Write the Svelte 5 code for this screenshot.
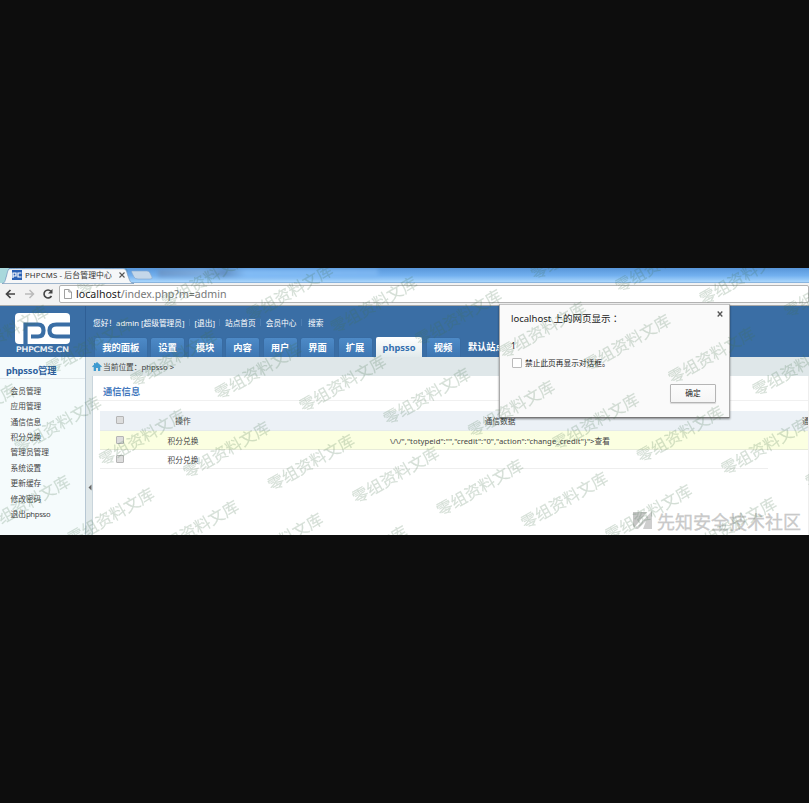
<script>
  const tabs = [
    { t: '我的面板', w: 51.5 }, { t: '设置', w: 33 }, { t: '模块', w: 33 }, { t: '内容', w: 33 },
    { t: '用户', w: 33 }, { t: '界面', w: 33 }, { t: '扩展', w: 33 }, { t: 'phpsso', w: 46, on: true }, { t: '视频', w: 33 }
  ];
  const side = ['会员管理', '应用管理', '通信信息', '积分兑换', '管理员管理', '系统设置', '更新缓存', '修改密码'];
  const marks = [];
  for (let r = -2; r <= 3; r++)
    for (let c = -3; c <= 11; c++) {
      const x = 223 + c * 84.4 - r * 31.4;
      const y = 391 - 268 + c * 12.6 + r * 78.8;
      if (x > -80 && x < 815 && y > -5 && y < 315) marks.push({ x, y });
    }
</script>

<div class="page">
  <div class="shot">
    <div class="strip">
      <svg class="tabshape" width="160" height="16" viewBox="0 0 160 16">
        <path d="M0 0H9L4 15H0Z" fill="#a9d8dc" />
        <path d="M2 15.5C5 15 5 13 6.500 8C8 2 8 .7 11 .7H123C126 .7 126.500 3 128 8C130 13 130 15 134 15.500Z" fill="#f6f7f8" stroke="#7899bb" stroke-width=".7" />
        <path d="M132 3H147Q149 3 150 5L152 9Q153 11 150 11H138Q135 11 134 9L132 5Q131 3 132 3Z" fill="#c4d7e9" stroke="#7fa4cc" stroke-width=".6" />
      </svg>
      <div class="tabline">
        <svg width="10" height="10" viewBox="0 0 10 10"><rect width="10" height="10" fill="#2b62b5" /><path d="M1 8V3H4V6H1M9.500 3H6V7H9.500" fill="none" stroke="#fff" stroke-width="1.200" /></svg>
        <span>PHPCMS - 后台管理中心</span>
        <svg class="x" width="6" height="6" viewBox="0 0 6 6"><path d="M.5 .5L5.500 5.500M5.500 .5L.5 5.500" stroke="#555" stroke-width="1.100" /></svg>
      </div>
      <div class="ghost"></div>
    </div>

    <div class="toolbar">
      <svg width="60" height="20" viewBox="0 0 60 20" fill="none">
        <path d="M15 10H7M10.500 6L6.500 10L10.500 14" stroke="#444" stroke-width="1.700" />
        <path d="M25 10H33M29.500 6L33.500 10L29.500 14" stroke="#bbb" stroke-width="1.500" />
        <path d="M51 7.300A4 4 0 1 0 51.500 12" stroke="#444" stroke-width="1.600" /><path d="M52.500 5V9.500H48Z" fill="#444" />
      </svg>
      <div class="url">
        <svg width="8" height="10" viewBox="0 0 8 10"><path d="M.5 .5H4.800L7.500 3V9.500H.5ZM4.800 .5V3H7.500" fill="#fff" stroke="#888" stroke-width=".8" /></svg>
        <span><b>localhost</b>/index.php?m=admin</span>
      </div>
    </div>

    <div class="head">
      <div class="logo">
        <svg width="85" height="51" viewBox="0 0 85 51">
          <rect x="15" y="7" width="55" height="31" rx="4" fill="#fff" />
          <path d="M25.500 38V18.500H38Q43.500 18.500 43.500 24.500Q43.500 30.500 38 30.500H31" fill="none" stroke="#3a6ea5" stroke-width="4.200" />
          <path d="M70 18.500H56.500Q49.500 18.500 49.500 24.500Q49.500 30.500 56.500 30.500H70" fill="none" stroke="#3a6ea5" stroke-width="4.200" />
          <text x="16" y="46" textLength="53" lengthAdjust="spacingAndGlyphs" font-size="7.5" fill="#fff" stroke="#fff" stroke-width=".2">PHPCMS.CN</text>
        </svg>
      </div>
      <div class="headmain">
        <div class="hello"><span>您好！admin [超级管理员]</span><i></i><span>[退出]</span><i></i><span>站点首页</span><i></i><span>会员中心</span><i class="wide"></i><span>搜索</span></div>
        <div class="tabs">
          {#each tabs as tab}
            <div class="tab" class:on={tab.on} style="width:{tab.w}px">{tab.t}</div>
          {/each}
          <div class="site">默认站点</div>
        </div>
      </div>
    </div>

    <div class="body">
      <div class="side">
        <h2>phpsso管理</h2>
        {#each side as s}<div class="item">{s}</div>{/each}
        <div class="item">退出<span>phpsso</span></div>
      </div>
      <div class="bar"><svg width="4" height="7" viewBox="0 0 4 7"><path d="M3.500 .5V6.500L.5 3.500Z" fill="#666" /></svg></div>
      <div class="right">
        <div class="crumb">
          <svg width="10" height="9" viewBox="0 0 10 9"><path d="M5 0L10 4.500L9 5.200L8.300 4.700V9H6V6H4V9H1.700V4.700L1 5.200L0 4.500L2 2.700V1H3.200V1.700Z" fill="#3f9bd0" /></svg>
          <span>当前位置：phpsso &gt;</span>
        </div>
        <div class="content">
          <h3>通信信息</h3>
          <div class="row th"><div class="c1"><em></em></div><div class="c2">操作</div><div class="c3">通信数据</div><div class="c4">通</div></div>
          <div class="row hl"><div class="c1"><em></em></div><div class="c2">积分兑换</div><div class="c3 data">\/\/","totypeid":"","credit":"0","action":"change_credit"&#125;">查看</div></div>
          <div class="row last"><div class="c1"><em></em></div><div class="c2">积分兑换</div></div>
        </div>
      </div>
    </div>

    <div class="dialog">
      <svg class="close" width="6" height="6" viewBox="0 0 6 6"><path d="M.7 .5L5.300 5.500M5.300 .5L.7 5.500" stroke="#555" stroke-width="1.300" /></svg>
      <div class="dt">localhost 上的网页显示<span>：</span></div>
      <div class="one">1</div>
      <div class="stop"><em></em><span>禁止此页再显示对话框。</span></div>
      <div class="ok">确定</div>
    </div>

    <div class="community">
      <svg width="20" height="19" viewBox="0 0 20 19"><path d="M0 1H14L1 17L0 15Z" fill="#c6c6c6" /><path d="M2 18L19 0V18H10L13 10L5 18Z" fill="#cecece" /></svg>
      <span>先知安全技术社区</span>
    </div>

    <svg class="marks" width="809" height="267" viewBox="0 0 809 267">
      {#each marks as m}
        <text transform="translate({m.x} {m.y}) rotate(-29.700)" x="-8" y="6" textLength="96.600">零组资料文库</text>
      {/each}
    </svg>
  </div>
</div>

<style>
  .page { width: 809px; height: 803px; box-sizing: border-box; padding-top: 268px; background: #0d0d0d; overflow: hidden; font-family: "Noto Sans", "Noto Sans CJK SC", sans-serif; font-size: 7.7px; color: #444; white-space: nowrap; }
  .shot { position: relative; display: flex; flex-direction: column; width: 809px; height: 267px; overflow: hidden; background: #fff; }
  .strip { position: relative; height: 15px; flex: none; background: linear-gradient(#5896d9, #72b0ef 50%, #a5d3fb 90%, #7ba5d0); }
  .tabshape { position: absolute; left: 0; top: 0; z-index: 1; }
  .tabline { position: relative; z-index: 2; display: flex; align-items: center; height: 13px; padding-left: 12px; font-size: 7.8px; color: #333; }
  .tabline span { margin-left: 3px; width: 87px; letter-spacing: .14px; margin-top: -1px; }
  .x { margin-left: 7px; margin-top: 1px; }
  .ghost { position: absolute; left: 158px; top: 1px; width: 220px; height: 8px; background: linear-gradient(90deg, #6c8fbc, #87aed9 20%, #6286b4 30%, #8dc4fa 40%, #83bbf4); filter: blur(2px); opacity: .7; }
  .toolbar { display: flex; height: 23px; flex: none; box-sizing: border-box; background: #f2f2f2; border-bottom: 1px solid #aaa; padding-top: 2px; }
  .toolbar > svg { margin-top: -1px; flex: none; }
  .url { display: flex; align-items: center; box-sizing: border-box; width: 755px; height: 18px; margin-left: -1px; padding-left: 4px; border: 1px solid #b2b2b2; border-radius: 2px; background: #fff; color: #777; font-size: 10.6px; }
  .url span { margin-left: 4px; }
  .url b { font-weight: 400; color: #222; }
  .head { display: flex; height: 51px; flex: none; background: #3a6ea5; color: #fff; }
  .logo { width: 85px; border-right: 1px solid #2f5f95; box-sizing: content-box; flex: none; }
  .logo text { font-family: "DejaVu Sans", sans-serif; }
  .headmain { padding-left: 7px; display: flex; flex-direction: column; justify-content: space-between; }
  .hello { display: flex; align-items: center; height: 12px; padding-top: 10px; font-size: 7.7px; }
  .hello i { width: 1px; height: 7px; margin: 0 5px 0 4px; background: #4c7db1; }
  .hello .wide { margin-right: 6.5px; }
  .tabs { display: flex; align-items: flex-end; padding-left: 2px; gap: 4.5px; height: 20px; }
  .tab { height: 19px; line-height: 19px; text-align: center; font-weight: 700; font-size: 9.3px; background: linear-gradient(#4d8ac7, #3d76b2); border-radius: 2px 2px 0 0; box-shadow: 0 0 1px #28578b; }
  .tab.on { height: 20px; line-height: 21px; background: linear-gradient(#fff, #e1eaec); color: #3570b0; box-shadow: none; }
  .site { font-size: 9.2px; font-weight: 700; line-height: 21px; margin-left: 4px; }
  .body { display: flex; flex: 1; min-height: 0; }
  .side { width: 85px; flex: none; background: #f5fbfc; }
  h2 { margin: 0 0 4px; height: 22px; line-height: 28px; padding-left: 6px; font-size: 9.3px; color: #2d5f9d; border-bottom: 1px solid #e3e9eb; box-sizing: border-box; letter-spacing: -.15px; }
  .item { height: 15.37px; line-height: 16px; padding-left: 10.5px; font-size: 7.7px; }
  .item span { letter-spacing: -.3px; }
  .bar { width: 7px; flex: none; box-sizing: border-box; border-left: 1px solid #b7c7d3; background: #e0e8ea; padding: 127px 0 0 2px; line-height: 0; }
  .right { flex: 1; min-width: 0; display: flex; flex-direction: column; }
  .crumb { display: flex; align-items: center; height: 19px; flex: none; background: #dfe7e9; gap: 1px; }
  .content { flex: 1; border-left: 1px solid #c9d5dc; border-right: 1px solid #eee; background: #fff; padding-left: 7px; }
  h3 { margin: 0 0 10px -7px; padding-left: 10px; height: 25px; line-height: 31px; box-sizing: border-box; border-bottom: 1px solid #f0f0f0; font-size: 9.3px; color: #4378bd; }
  .row { display: flex; align-items: center; height: 20px; box-sizing: border-box; overflow: hidden; }
  .row > div { flex: none; }
  .th { background: #ecf1f6; border-bottom: 1px solid #e5ebeb; }
  .hl { height: 19px; background: #fbffe1; border-bottom: 1px solid #e7ebd9; }
  .last { height: 19px; width: 668px; border-bottom: 1px solid #eee; }
  .c1 { width: 40px; display: flex; justify-content: center; }
  .c1 em { width: 6px; height: 6px; border: 1px solid #b5b5b5; border-radius: 1px; background: #ddd; margin-bottom: 1px; }
  .c2 { width: 86px; text-align: center; }
  .c3 { width: 548px; text-align: center; }
  .c4 { margin-left: 28px; }
  .c3.data { letter-spacing: .05px; }
  .dialog { position: absolute; left: 499px; top: 36px; background: #fafafa; border: 1px solid #aaa; border-top-color: #c4c4c4; border-bottom-color: #777; box-shadow: 0 1px 2px #0007; color: #222; display: flex; flex-direction: column; padding-left: 11px; box-sizing: border-box; width: 231px; height: 114px; }
  .close { position: absolute; right: 6px; top: 6px; }
  .dt { margin-top: 6px; font-size: 9.5px; line-height: 14px; }
  .dt span { font-family: "Noto Sans CJK TC", sans-serif; }
  .one { margin-top: 12px; line-height: 15px; font-size: 8.4px; }
  .stop { display: flex; align-items: center; height: 14px; margin-top: 3px; gap: 3px; padding-left: 1px; }
  .stop em { width: 8px; height: 8px; border: 1px solid #bbb; border-radius: 1px; background: #fff; }
  .stop span { margin-top: -1px; }
  .ok { box-sizing: border-box; width: 46px; height: 19px; margin: 14px 13px 0 auto; line-height: 17px; text-align: center; border: 1px solid #b5b5b5; border-radius: 1px; background: linear-gradient(#fcfcfc, #f5f5f5); box-shadow: 0 1px 1px #0002; }
  .community { position: absolute; left: 633px; top: 240px; display: flex; align-items: center; height: 25px; gap: 4px; color: #c9c9c9; font-size: 18px; -webkit-text-stroke: .3px #c9c9c9; }
  .marks { position: absolute; left: 0; top: 0; pointer-events: none; }
  .marks text { font-family: "Noto Sans CJK SC", sans-serif; font-size: 16px; fill: #426f4a; stroke: #426f4a; stroke-width: .2; opacity: .22; }
</style>
